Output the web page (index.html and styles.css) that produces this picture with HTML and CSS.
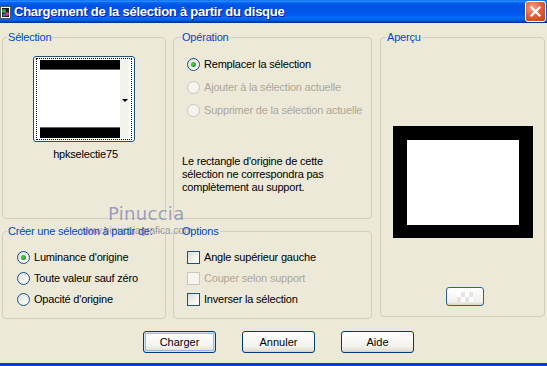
FILE: index.html
```html
<!DOCTYPE html>
<html>
<head>
<meta charset="utf-8">
<link rel="stylesheet" href="styles.css">
</head>
<body>
<div class="window">
	<div class="titlebar">
		<svg class="app-icon" width="11" height="13" viewBox="0 0 11 13">
			<rect x="0.5" y="0.5" width="10" height="12" fill="#fff" stroke="#555"/>
			<rect x="2" y="2" width="7" height="9" fill="#1a1a1a"/>
			<circle cx="4" cy="5" r="2" fill="#2bb34a"/>
			<circle cx="7" cy="8" r="2" fill="#d23a8a"/>
			<circle cx="4" cy="9" r="1.5" fill="#3a6fe0"/>
		</svg>
		<span class="title">Chargement de la sélection à partir du disque</span>
		<span class="close">
			<svg width="11" height="11" viewBox="0 0 11 11"><path d="M1.5 1.5 L9.5 9.5 M9.5 1.5 L1.5 9.5" stroke="#fff" stroke-width="2.2" stroke-linecap="square"/></svg>
		</span>
	</div>
	<div class="client">
		<div class="panes">
			<div class="left">
				<fieldset class="group g-sel">
					<legend>Sélection</legend>
					<div class="thumb">
						<div class="thumb-focus">
							<div class="thumb-img">
								<div class="bar-top"></div>
								<div class="bar-bottom"></div>
							</div>
							<div class="thumb-strip"><span class="arrow"></span></div>
						</div>
					</div>
					<div class="thumb-name">hpkselectie75</div>
				</fieldset>
				<fieldset class="group g-op">
					<legend>Opération</legend>
					<div class="op-list">
						<div class="option"><span class="radio checked"></span>Remplacer la sélection</div>
						<div class="option disabled"><span class="radio"></span>Ajouter à la sélection actuelle</div>
						<div class="option disabled"><span class="radio"></span>Supprimer de la sélection actuelle</div>
					</div>
					<p class="note">Le rectangle d'origine de cette<br>sélection ne correspondra pas<br>complètement au support.</p>
				</fieldset>
				<fieldset class="group g-src">
					<legend>Créer une sélection à partir de:</legend>
					<div class="opt-list">
						<div class="option"><span class="radio checked"></span>Luminance d'origine</div>
						<div class="option"><span class="radio"></span>Toute valeur sauf zéro</div>
						<div class="option"><span class="radio"></span>Opacité d'origine</div>
					</div>
				</fieldset>
				<fieldset class="group g-opt">
					<legend>Options</legend>
					<div class="opt-list">
						<div class="option"><span class="check"></span>Angle supérieur gauche</div>
						<div class="option disabled"><span class="check"></span>Couper selon support</div>
						<div class="option"><span class="check"></span>Inverser la sélection</div>
					</div>
				</fieldset>
			</div>
			<fieldset class="group g-preview">
				<legend>Aperçu</legend>
				<div class="preview"><div class="preview-inner"></div></div>
				<div class="preview-btn"><span class="checker"></span></div>
			</fieldset>
		</div>
		<div class="buttons">
			<button class="btn default">Charger</button>
			<button class="btn">Annuler</button>
			<button class="btn">Aide</button>
		</div>
	</div>
	<div class="watermark">
		<span class="wm-name">Pinuccia</span>
		<span class="wm-url">www.pinucciagrafica.com</span>
	</div>
</div>
</body>
</html>
```

FILE: styles.css
```css
* {
	box-sizing: border-box;
}
body {
	margin: 0;
	background: #ECE9D8;
	font: 11px/13px "Liberation Sans", Arial, sans-serif;
	letter-spacing: -0.2px;
	color: #000;
}
.window {
	position: relative;
	width: 547px;
	height: 366px;
	border-bottom: 3px solid #0A3BD6;
	display: flex;
	flex-direction: column;
	overflow: hidden;
}

/* title bar */
.titlebar {
	height: 23px;
	flex: 0 0 23px;
	display: flex;
	align-items: center;
	color: #fff;
	background: linear-gradient(to bottom, #0058EE 0%, #3593FF 4%, #288EFF 6%, #127DFF 8%, #036FFC 10%, #0262EE 14%, #0057E5 20%, #0054E3 24%, #0055EB 56%, #005BF5 66%, #026AFE 76%, #0062EF 86%, #0052D6 92%, #0040AB 94%, #003092 100%);
}
.app-icon {
	margin: 1px 3px 0 0;
	flex: none;
}
.title {
	font: bold 13px "Liberation Sans", Arial, sans-serif;
	letter-spacing: -0.25px;
	text-shadow: 1px 1px 0 #0A1883;
}
.close {
	margin-left: auto;
	margin-right: 1px;
	width: 21px;
	height: 21px;
	border: 1px solid #fff;
	border-radius: 3px;
	display: flex;
	align-items: center;
	justify-content: center;
	background: radial-gradient(circle at 35% 30%, #F0A58A 0%, #E2623F 45%, #C63D1E 100%);
}

/* client area */
.client {
	flex: 1;
	padding: 8px 0 0 2px;
}
.panes {
	display: flex;
	gap: 8px;
}
.left {
	display: grid;
	grid-template-columns: 164px 199px;
	grid-template-rows: 188px 94px;
	gap: 6px 7px;
}
fieldset.group {
	margin: 0;
	padding: 0;
	min-width: 0;
	border: 1px solid #D0D0BF;
	border-radius: 4px;
}
legend {
	margin-left: 4px;
	padding: 0 1px;
	color: #0046D5;
}
.g-op legend, .g-opt legend {
	margin-left: 7px;
}
.g-preview legend {
	margin-left: 5px;
}
.g-preview {
	width: 165px;
	height: 286px;
}

/* selection thumbnail */
.thumb {
	width: 102px;
	height: 86px;
	margin: 12px auto 0;
	padding: 1px 2px;
	border: 1px solid #1C5180;
	border-radius: 3px;
	background: #fff;
}
.thumb-focus {
	height: 100%;
	padding: 1px 3px;
	border: 1px dotted #000;
	display: flex;
}
.thumb-img {
	flex: 0 0 80px;
	display: flex;
	flex-direction: column;
	justify-content: space-between;
}
.bar-top {
	height: 10px;
	background: #000;
	border-bottom: 1px solid #666;
}
.bar-bottom {
	height: 11px;
	background: #000;
	border-top: 1px solid #666;
}
.thumb-strip {
	flex: 1;
	background: #F3F2EE;
	display: flex;
	align-items: center;
	justify-content: flex-end;
}
.arrow {
	width: 0;
	height: 0;
	margin: 3px 0 0;
	border-left: 3px solid transparent;
	border-right: 3px solid transparent;
	border-top: 3px solid #000;
}
.thumb-name {
	margin-top: 6px;
	text-align: center;
	padding-left: 3px;
}

/* radio / check rows */
.option {
	display: flex;
	align-items: center;
	height: 13px;
	white-space: nowrap;
}
.option.disabled {
	color: #ACA899;
}
.radio, .check {
	flex: none;
	width: 13px;
	height: 13px;
	margin-right: 4px;
	border: 1px solid #1C5180;
	background: linear-gradient(135deg, #DCDCD7 0%, #F4F4F0 60%, #fff 100%);
	display: flex;
	align-items: center;
	justify-content: center;
}
.radio {
	border-radius: 50%;
}
.radio.checked::after {
	content: "";
	width: 5px;
	height: 5px;
	border-radius: 50%;
	background: radial-gradient(circle at 40% 40%, #55D455 0%, #21A121 60%, #1A861A 100%);
}
.disabled .radio, .disabled .check {
	border-color: #CAC8BB;
	background: #F5F4EE;
}
.op-list {
	padding: 14px 0 0 13px;
	display: flex;
	flex-direction: column;
	gap: 10px;
}
.note {
	margin: 38px 0 0 8px;
}
.opt-list {
	display: flex;
	flex-direction: column;
	gap: 8px;
	padding-top: 13px;
}
.g-src .opt-list {
	padding-left: 14px;
}
.g-opt .opt-list {
	padding-left: 13px;
}

/* preview */
.preview {
	width: 140px;
	height: 112px;
	margin: 82px 0 0 12px;
	padding: 14px 14px 13px;
	background: #000;
}
.preview-inner {
	height: 100%;
	background: #fff;
}
.preview-btn {
	width: 38px;
	height: 19px;
	margin: 49px 0 0 65px;
	border: 1px solid #2F5E9E;
	border-radius: 3px;
	background: linear-gradient(#fff, #F2F1EC 80%, #D8D5CB);
	display: flex;
	align-items: center;
	justify-content: center;
}
.checker {
	width: 16px;
	height: 10px;
	background: repeating-conic-gradient(#E4E4E4 0 25%, #fff 0 50%) 0 0 / 8px 10px;
}

/* buttons */
.buttons {
	display: flex;
	gap: 26px;
	margin-top: 12px;
	padding-left: 141px;
}
.btn {
	width: 73px;
	height: 22px;
	padding: 0;
	font: 11px "Liberation Sans", Arial, sans-serif;
	color: #000;
	border: 1px solid #003C74;
	border-radius: 3px;
	background: linear-gradient(#FFFFFF 0%, #F4F3EE 70%, #E3E0D4 92%, #D6D0C5 100%);
}
.btn.default {
	box-shadow: inset 0 0 0 1px #CEE7FF, inset 0 0 0 2px #98B8EA;
}

/* watermark over the dialog */
.watermark {
	position: absolute;
	left: 80px;
	top: 204px;
	pointer-events: none;
}
.wm-name {
	display: block;
	margin-left: 28px;
	font: 18px/19px "DejaVu Sans", sans-serif;
	letter-spacing: 0.3px;
	color: rgba(130, 130, 175, 0.75);
}
.wm-url {
	display: block;
	margin-top: 2px;
	font: 10px/11px "Liberation Sans", Arial, sans-serif;
	letter-spacing: 0;
	color: rgba(90, 90, 130, 0.6);
}
```
